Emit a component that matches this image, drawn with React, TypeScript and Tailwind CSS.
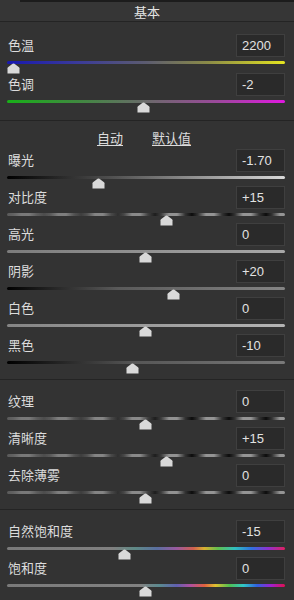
import React from "react";

type Slider = {
  label: string;
  value: string;
  pos: number; // thumb centre, page x
  track: string;
};

const PATTERN =
  "bg-[linear-gradient(to_right,rgba(110,110,110,0.8),rgba(110,110,110,0.3)_45%,rgba(110,110,110,0)_65%),repeating-linear-gradient(to_right,#0c0c0c_0px,#333_6px,#959595_14px,#959595_22px,#333_30px,#0c0c0c_37px)]";

const RAINBOW_VIB =
  "bg-[linear-gradient(to_right,#7a7a7a,#808080_38%,#5f8a86_46%,#5a6fa0_54%,#9a5aa0_61%,#d06050_67%,#d8b030_71%,#60c050_76%,#30c0c0_82%,#3070e0_88%,#9030d0_94%,#e02060)]";

const RAINBOW_SAT =
  "bg-[linear-gradient(to_right,#7a7a7a,#828282_48%,#5a8a90_55%,#6060b0_61%,#b050a0_66%,#e06040_71%,#e0c030_75%,#50c050_80%,#30c8c8_85%,#3060e0_90%,#a020d0_95%,#e01050)]";

const wbItems: Slider[] = [
  {
    label: "色温",
    value: "2200",
    pos: 13,
    track:
      "bg-[linear-gradient(to_right,#1818b0,#3a3a9a_25%,#5c5c70_50%,#8a8a48_72%,#e4e420)]",
  },
  {
    label: "色调",
    value: "-2",
    pos: 143,
    track:
      "bg-[linear-gradient(to_right,#18b018,#3f8a3f_25%,#6a6a6a_50%,#9a4a9a_75%,#e018e0)]",
  },
];

const toneItems: Slider[] = [
  {
    label: "曝光",
    value: "-1.70",
    pos: 98,
    track: "bg-[linear-gradient(to_right,#000,#555_40%,#d8d8d8)]",
  },
  { label: "对比度", value: "+15", pos: 166, track: PATTERN },
  {
    label: "高光",
    value: "0",
    pos: 145,
    track: "bg-[linear-gradient(to_right,#7c7c7c,#a8a8a8)]",
  },
  {
    label: "阴影",
    value: "+20",
    pos: 173,
    track: "bg-[linear-gradient(to_right,#000,#5a5a5a_40%,#858585)]",
  },
  {
    label: "白色",
    value: "0",
    pos: 145,
    track: "bg-[linear-gradient(to_right,#858585,#b4b4b4)]",
  },
  {
    label: "黑色",
    value: "-10",
    pos: 132,
    track: "bg-[linear-gradient(to_right,#000,#555_45%,#7a7a7a)]",
  },
];

const presenceItems: Slider[] = [
  { label: "纹理", value: "0", pos: 145, track: PATTERN },
  { label: "清晰度", value: "+15", pos: 166, track: PATTERN },
  { label: "去除薄雾", value: "0", pos: 145, track: PATTERN },
];

const colorItems: Slider[] = [
  { label: "自然饱和度", value: "-15", pos: 124, track: RAINBOW_VIB },
  { label: "饱和度", value: "0", pos: 145, track: RAINBOW_SAT },
];

const Thumb = ({ pos }: { pos: number }) => (
  <svg
    width="13"
    height="11"
    viewBox="0 0 13 11"
    className="absolute top-[2px]"
    style={{ left: pos - 7 - 6.5 }}
  >
    <path
      d="M0.5 10.5 L0.5 5.2 Q0.5 4.6 1 4.2 L5.6 0.8 Q6.5 0.2 7.4 0.8 L12 4.2 Q12.5 4.6 12.5 5.2 L12.5 10.5 Z"
      fill="#d9d9d9"
    />
  </svg>
);

const Row = ({ s, h }: { s: Slider; h: string }) => (
  <div className={`${h} pl-[7px] pr-[9px]`}>
    <div className="flex h-[22px] items-center justify-between">
      <span className="pl-[1px] text-[13px] leading-none text-[#dcdcdc]">
        {s.label}
      </span>
      <div className="flex h-[23px] w-[49px] items-center border border-[#3f3f3f] bg-[#2a2a2a] pl-[5px] text-[13px] leading-none text-[#e2e2e2]">
        {s.value}
      </div>
    </div>
    <div className="relative h-[15px]">
      <div className={`mt-[5px] h-[3px] w-full rounded-full ${s.track}`} />
      <Thumb pos={s.pos} />
    </div>
  </div>
);

const Divider = () => <div className="h-px bg-[#242424]" />;

export default function App() {
  return (
    <div
      className="h-[600px] w-[294px] overflow-hidden bg-[#333333]"
      style={{
        fontFamily:
          '"Liberation Sans", "Noto Sans CJK SC", "Noto Sans", sans-serif',
      }}
    >
      {/* header */}
      <div className="bg-[#363636]">
        <div className="h-[3px] pl-[20px]">
          <div className="h-[2px] bg-[#1c1c1c]" />
        </div>
        <div className="flex h-[18px] items-center justify-center text-[13px] leading-none text-[#e4e4e4]">
          基本
        </div>
      </div>
      <Divider />

      <div className="pt-[12px] pb-[8px]">
        {wbItems.map((s) => (
          <Row key={s.label} s={s} h="h-[39px]" />
        ))}
      </div>
      <Divider />

      <div className="flex h-[28px] justify-center gap-[29px] pr-[6px] pt-[10px] text-[13px] leading-[15px] text-[#dcdcdc]">
        <span className="underline underline-offset-2">自动</span>
        <span className="underline underline-offset-2">默认值</span>
      </div>
      <div className="pb-[8px]">
        {toneItems.map((s) => (
          <Row key={s.label} s={s} h="h-[37px]" />
        ))}
      </div>
      <Divider />

      <div className="pt-[10px] pb-[8px]">
        {presenceItems.map((s) => (
          <Row key={s.label} s={s} h="h-[37px]" />
        ))}
      </div>
      <Divider />

      <div className="pt-[10px]">
        {colorItems.map((s) => (
          <Row key={s.label} s={s} h="h-[37px]" />
        ))}
      </div>
    </div>
  );
}
